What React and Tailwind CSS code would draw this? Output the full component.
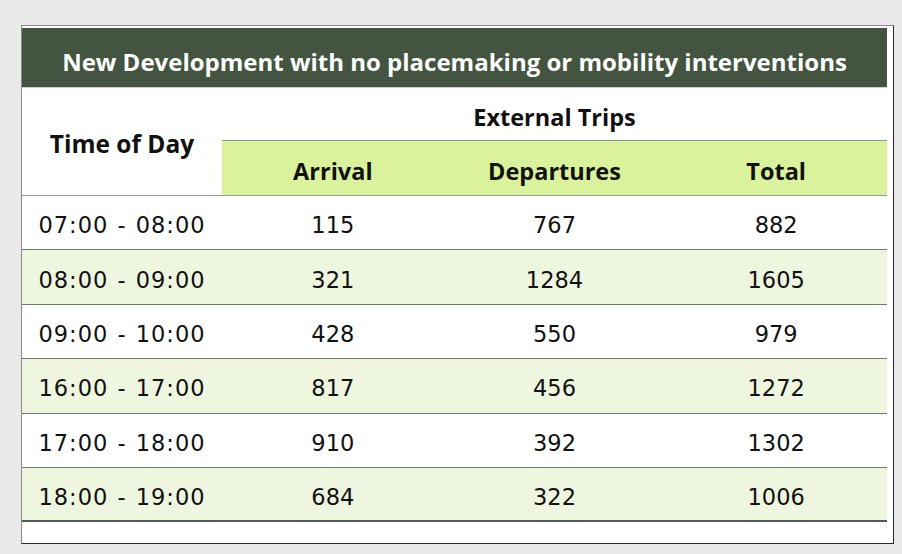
import React from "react";

const rows = [
  ["07:00 - 08:00", "115", "767", "882"],
  ["08:00 - 09:00", "321", "1284", "1605"],
  ["09:00 - 10:00", "428", "550", "979"],
  ["16:00 - 17:00", "817", "456", "1272"],
  ["17:00 - 18:00", "910", "392", "1302"],
  ["18:00 - 19:00", "684", "322", "1006"],
];

const head = { fontFamily: '"Open Sans", "Noto Sans", sans-serif' };
const body = { fontFamily: '"DejaVu Sans", "Noto Sans", sans-serif' };

export default function App() {
  return (
    <div className="w-[902px] h-[554px] bg-[#e9e9e9] pt-[25px] pl-[21px]">
      <div className="w-[873px] h-[519px] bg-white border border-t-[#8a8a8a] border-l-[#8a8a8a] border-r-[#2a2a2a] border-b-[#2a2a2a] pt-[2px] pr-[6px] pl-0">
        <div className="w-[865px]">
          <div
            className="h-[60px] bg-[#435440] flex items-center justify-center text-white font-bold text-[24px] border-b border-[#cfd3cd] pt-[8px]"
            style={head}
          >
            New Development with no placemaking or mobility interventions
          </div>
          <div className="grid grid-cols-[200px_1fr_1fr_1fr] text-[#111] font-bold text-[23.5px]" style={head}>
            <div className="row-span-2 flex items-center justify-center border-b border-[#9aa098] pt-[6px] text-[24.5px]">
              Time of Day
            </div>
            <div className="col-span-3 h-[53px] flex items-center justify-center border-b border-[#8d948a] pt-[8px]">
              External Trips
            </div>
            <div className="h-[55px] bg-[#daf29b] flex items-center justify-center border-b border-[#9aa098] pt-[8px]">
              Arrival
            </div>
            <div className="h-[55px] bg-[#daf29b] flex items-center justify-center border-b border-[#9aa098] pt-[8px]">
              Departures
            </div>
            <div className="h-[55px] bg-[#daf29b] flex items-center justify-center border-b border-[#9aa098] pt-[8px]">
              Total
            </div>
          </div>
          {rows.map((r, i) => (
            <div
              key={i}
              className={
                "grid grid-cols-[200px_1fr_1fr_1fr] h-[54.4px] text-[22.5px] text-[#111] " +
                (i % 2 === 1 ? "bg-[#eff6df] " : "bg-white ") +
                (i === rows.length - 1
                  ? "border-b-2 border-[#4f5e4c]"
                  : "border-b border-[#6f7d6c]")
              }
              style={body}
            >
              {r.map((c, j) => (
                <div
                  key={j}
                  className={
                    "flex items-center justify-center pt-[7px] " +
                    (j === 0 ? "tracking-[1px] [word-spacing:1px]" : "")
                  }
                >
                  {c}
                </div>
              ))}
            </div>
          ))}
        </div>
      </div>
    </div>
  );
}
